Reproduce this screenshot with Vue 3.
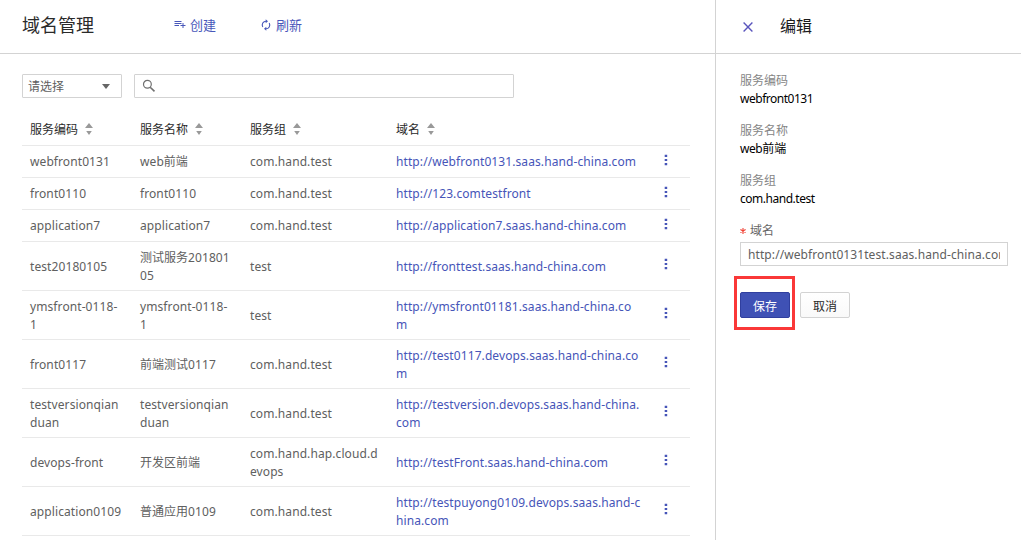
<script setup>
const columns = ['服务编码', '服务名称', '服务组', '域名']
const rows = [
  ['webfront0131', 'web前端', 'com.hand.test', 'http://webfront0131.saas.hand-china.com'],
  ['front0110', 'front0110', 'com.hand.test', 'http://123.comtestfront'],
  ['application7', 'application7', 'com.hand.test', 'http://application7.saas.hand-china.com'],
  ['test20180105', '测试服务201801\n05', 'test', 'http://fronttest.saas.hand-china.com'],
  ['ymsfront-0118-\n1', 'ymsfront-0118-\n1', 'test', 'http://ymsfront01181.saas.hand-china.co\nm'],
  ['front0117', '前端测试0117', 'com.hand.test', 'http://test0117.devops.saas.hand-china.co\nm'],
  ['testversionqian\nduan', 'testversionqian\nduan', 'com.hand.test', 'http://testversion.devops.saas.hand-china.\ncom'],
  ['devops-front', '开发区前端', 'com.hand.hap.cloud.d\nevops', 'http://testFront.saas.hand-china.com'],
  ['application0109', '普通应用0109', 'com.hand.test', 'http://testpuyong0109.devops.saas.hand-c\nhina.com'],
]
const isTall = (row) => row.some((c) => c.includes('\n'))
// Latin runs and Han runs are tracked differently
const runs = (text) => text.match(/[\u4e00-\u9fff]+|[^\u4e00-\u9fff]+/g)
const isHan = (run) => /[\u4e00-\u9fff]/.test(run)
const details = [
  ['服务编码', 'webfront0131'],
  ['服务名称', 'web前端'],
  ['服务组', 'com.hand.test'],
]
</script>

<template>
  <div class="page">
    <main class="main">
      <header class="bar">
        <h1 class="title">域名管理</h1>
        <a class="action create">
          <svg width="12" height="12" viewBox="0 0 12 12"><path d="M0.5 2.5h7M0.5 4.5h7M0.5 6.5h4.5M9 4v5M6.5 6.5h5" fill="none" stroke="currentColor" /></svg>
          <span>创建</span>
        </a>
        <a class="action refresh">
          <svg width="12" height="12" viewBox="0 0 12 12"><path d="M6.2 2.2A3.8 3.8 0 0 0 2.8 8M5.8 9.8A3.8 3.8 0 0 0 9.2 4" fill="none" stroke="currentColor" stroke-width="1.1" /><path d="M5.7 0.2L8 2.2 5.7 4.2zM6.3 7.8L4 9.8l2.3 2z" fill="currentColor" /></svg>
          <span>刷新</span>
        </a>
      </header>
      <div class="filters">
        <div class="select"><span>请选择</span><i class="caret"></i></div>
        <div class="search">
          <svg width="14" height="14" viewBox="0 0 14 14"><circle cx="5.4" cy="5.3" r="3.9" fill="none" stroke="#707070" stroke-width="1.2" /><path d="M8.2 8.2l4.3 4.2" stroke="#707070" stroke-width="1.6" /></svg>
        </div>
      </div>
      <div class="table">
        <div class="row head">
          <div v-for="c in columns" :key="c" class="cell">
            {{ c }}
            <svg class="sort" width="8" height="12" viewBox="0 0 8 12"><path d="M4 0L8 5H0zM1.2 8h5.6L4 12z" fill="#999" /></svg>
          </div>
        </div>
        <div v-for="(r, i) in rows" :key="i" class="row" :class="{ tall: isTall(r) }">
          <div v-for="(c, j) in r" :key="j" class="cell" :class="{ link: j === 3 }">
            <div class="text">
              <div v-for="line in c.split('\n')" :key="line"><span v-for="(t, k) in runs(line)" :key="k" :class="{ latin: !isHan(t) }">{{ t }}</span></div>
            </div>
          </div>
          <div class="cell more">
            <svg width="4" height="12" viewBox="0 0 4 12"><path d="M0.7 0.8h2.5v2.2H0.7zM0.7 4.9h2.5v2.2H0.7zM0.7 9h2.5v2.2H0.7z" fill="#4655b8" /></svg>
          </div>
        </div>
      </div>
    </main>
    <aside class="panel">
      <header class="bar">
        <svg class="close" width="10" height="10" viewBox="0 0 10 10"><path d="M0.6 0.6l8.8 8.8M9.4 0.6L0.6 9.4" stroke="#5a55bd" stroke-width="1.4" /></svg>
        <h2 class="heading">编辑</h2>
      </header>
      <div class="form">
        <div v-for="d in details" :key="d[0]" class="detail">
          <div class="label">{{ d[0] }}</div>
          <div class="value"><span v-for="(t, k) in runs(d[1])" :key="k" :class="{ narrow: !isHan(t) }">{{ t }}</span></div>
        </div>
        <div class="label required"><svg width="6" height="6" viewBox="0 0 6 6"><path d="M3 0v6M0.4 1.5l5.2 3M5.6 1.5l-5.2 3" stroke="#f04134" stroke-width="1.1" /></svg>域名</div>
        <div class="input"><div class="clip latin">http://webfront0131test.saas.hand-china.com</div></div>
        <div class="buttons">
          <button class="btn primary">保存<i class="marker"></i></button>
          <button class="btn">取消</button>
        </div>
      </div>
    </aside>
  </div>
</template>

<style>
body { margin: 0; background: #fff; overflow: hidden; }
</style>

<style scoped>
.page { display: flex; width: 1021px; height: 540px; overflow: hidden; font: 12px/18px "Noto Sans", "Noto Sans CJK SC", sans-serif; color: #606060; }
.main { width: 715px; flex: none; }
.bar { height: 53px; border-bottom: 1px solid #d3d3d3; display: flex; align-items: center; box-sizing: content-box; }
.title { margin: 0 0 3px 22px; width: 152px; font-size: 18px; line-height: 26px; font-weight: 400; color: #2a2a2a; }
.action { display: flex; align-items: center; gap: 4px; color: #4857ba; font-size: 13px; line-height: 20px; margin-bottom: 4px; }
.create { width: 86px; }
.filters { display: flex; gap: 12px; padding: 20px 0 0 22px; }
.select, .search { height: 24px; box-sizing: border-box; border: 1px solid #d3d3d3; display: flex; align-items: center; border-radius: 1px; }
.select { width: 100px; justify-content: space-between; padding: 0 11px 0 5px; }
.select span { padding-top: 2px; }
.caret { border: 4.5px solid transparent; border-top: 5px solid #666; border-bottom: 0; }
.search { width: 380px; padding-left: 7px; }
.table { margin: 14px 25px 0 22px; }
.row { display: grid; grid-template-columns: 110px 110px 146px 262px 40px; height: 31px; align-items: center; border-bottom: 1px solid #e9e9e9; }
.row.tall { height: 48px; }
.head { height: 33px; color: #2a2a2a; }
.cell { padding-left: 8px; white-space: nowrap; display: flex; align-items: center; }
.text { white-space: nowrap; }
.tall .text { padding-top: 2px; }
.head .cell { gap: 7px; padding-top: 2px; }
.sort { margin-bottom: 1px; }
.latin { letter-spacing: 0.09px; }
.link { color: #4655b8; }
.more { padding: 0 0 3px 14px; }
.tall .more { padding-bottom: 4px; }
.panel { flex: 1; min-width: 0; border-left: 1px solid #d3d3d3; }
.close { margin: 1px 0 0 27px; }
.heading { margin: 0 0 2px 27px; font-size: 16px; line-height: 24px; font-weight: 400; color: #1a1a1a; }
.form { padding: 18px 13px 0 24px; }
.detail { margin-bottom: 14px; }
.label { color: #858585; }
.value { color: #000; }
.narrow { letter-spacing: -0.48px; }
.required { display: flex; align-items: center; gap: 4px; color: #666; }
.input { box-sizing: border-box; height: 24px; margin-top: 2px; border: 1px solid #d3d3d3; padding: 2px 7px 0; display: flex; align-items: center; }
.clip { overflow: hidden; white-space: nowrap; }
.buttons { display: flex; gap: 10px; margin-top: 26px; }
.btn { position: relative; width: 50px; height: 26px; box-sizing: border-box; padding: 3px 0 0; border: 1px solid #d3d3d3; border-radius: 2px; background: linear-gradient(#fff, #f9f9f9); color: #2a2a2a; font: inherit; }
.primary { background: #3f51b5; border-color: #303f9f; color: #fff; }
.marker { position: absolute; left: -7px; top: -17px; width: 55px; height: 48px; border: 3px solid #fa3838; }
</style>
